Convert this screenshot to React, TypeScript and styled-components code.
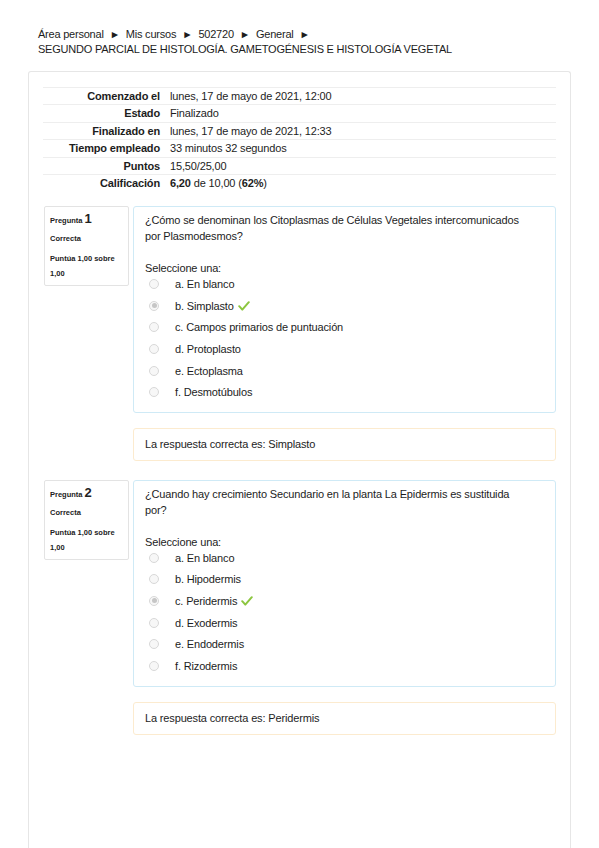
import React from 'react'
import styled, { createGlobalStyle } from 'styled-components'

const GlobalStyle = createGlobalStyle`
  html, body {
    margin: 0;
    padding: 0;
    background: #ffffff;
  }
  body {
    font-family: 'Liberation Sans', Arial, sans-serif;
    color: #1d1d1d;
    font-size: 11px;
    letter-spacing: -0.15px;
  }
`

const Page = styled.div`
  padding: 27px 28px 0 28px;
  height: 848px;
  box-sizing: border-box;
  overflow: hidden;
`

const Breadcrumb = styled.div`
  padding-left: 10px;
  line-height: 15px;
  letter-spacing: -0.22px;
  margin-bottom: 14px;
`

const Arrow = styled.span`
  font-size: 10.5px;
  margin: 0 6px 0 6px;
`

const Region = styled.div`
  border: 1px solid #e6e6e6;
  border-bottom: none;
  border-radius: 3px 3px 0 0;
  padding: 15px 14px 0 14px;
  min-height: 900px;
`

const Summary = styled.div`
  display: grid;
  grid-template-columns: 122px 1fr;
  border-top: 1px solid #eeeeee;
  margin-bottom: 15px;
`

const SummaryLabel = styled.div`
  text-align: right;
  font-weight: bold;
  padding-right: 5px;
  line-height: 16.4px;
  border-bottom: 1px solid #eeeeee;
  &:nth-last-child(2) {
    border-bottom: none;
  }
`

const SummaryValue = styled.div`
  padding-left: 5px;
  line-height: 16.4px;
  border-bottom: 1px solid #eeeeee;
  &:last-child {
    border-bottom: none;
  }
`

const Question = styled.div`
  display: flex;
  align-items: flex-start;
  gap: 4px;
  margin-bottom: 19px;
`

const Info = styled.div`
  width: 85px;
  height: 80px;
  box-sizing: border-box;
  margin-left: 1px;
  border: 1px solid #e3e3e3;
  border-radius: 2px;
  padding: 4px 5px;
  font-size: 7.5px;
  font-weight: bold;
  letter-spacing: 0;
  color: #222;
`

const InfoTitle = styled.div`
  line-height: 16px;
`

const QNumber = styled.span`
  font-size: 13px;
  margin-left: 2px;
`

const InfoLine = styled.div<{ $gap?: number }>`
  line-height: 15px;
  margin-top: ${({ $gap }) => $gap ?? 0}px;
`

const Content = styled.div`
  flex: 1;
  display: flex;
  flex-direction: column;
  gap: 15px;
`

const Formulation = styled.div`
  border: 1px solid #cfeaf6;
  border-radius: 3px;
  padding: 5px 11px 9px 11px;
`

const QText = styled.div`
  line-height: 16px;
`

const Prompt = styled.div`
  margin-top: 16px;
  line-height: 16px;
`

const Options = styled.div`
  display: flex;
  flex-direction: column;
  margin-top: -3px;
`

const Option = styled.div`
  display: flex;
  align-items: center;
  height: 21.6px;
  padding-left: 4px;
`

const Radio = styled.span<{ $checked?: boolean }>`
  width: 10px;
  height: 10px;
  border-radius: 50%;
  border: 1px solid #d8d8d8;
  background: #f7f7f7;
  box-sizing: border-box;
  margin-right: 16px;
  display: inline-flex;
  align-items: center;
  justify-content: center;
  &::after {
    content: '';
    width: 5px;
    height: 5px;
    border-radius: 50%;
    background: ${({ $checked }) => ($checked ? '#c6c6c6' : 'transparent')};
  }
`

const Check = styled.svg`
  margin-left: 4px;
`

const Feedback = styled.div`
  border: 1px solid #fcebcf;
  border-radius: 3px;
  padding: 8px 11px;
  line-height: 15px;
`

type QuestionData = {
  num: number
  text: string[]
  options: string[]
  correct: number
  answer: string
}

const questions: QuestionData[] = [
  {
    num: 1,
    text: ['¿Cómo se denominan los Citoplasmas de Células Vegetales intercomunicados', 'por Plasmodesmos?'],
    options: [
      'a. En blanco',
      'b. Simplasto',
      'c. Campos primarios de puntuación',
      'd. Protoplasto',
      'e. Ectoplasma',
      'f. Desmotúbulos',
    ],
    correct: 1,
    answer: 'Simplasto',
  },
  {
    num: 2,
    text: ['¿Cuando hay crecimiento Secundario en la planta La Epidermis es sustituida', 'por?'],
    options: ['a. En blanco', 'b. Hipodermis', 'c. Peridermis', 'd. Exodermis', 'e. Endodermis', 'f. Rizodermis'],
    correct: 2,
    answer: 'Peridermis',
  },
]

const summary: [string, React.ReactNode][] = [
  ['Comenzado el', 'lunes, 17 de mayo de 2021, 12:00'],
  ['Estado', 'Finalizado'],
  ['Finalizado en', 'lunes, 17 de mayo de 2021, 12:33'],
  ['Tiempo empleado', '33 minutos 32 segundos'],
  ['Puntos', '15,50/25,00'],
  [
    'Calificación',
    <>
      <b>6,20</b> de 10,00 (<b>62%</b>)
    </>,
  ],
]

const CheckIcon = () => (
  <Check width="12" height="10" viewBox="0 0 12 10">
    <path d="M1.2 5.2 L4.3 8.6 L10.8 1.2" fill="none" stroke="#8cc63f" strokeWidth="2" strokeLinecap="round" strokeLinejoin="round" />
  </Check>
)

const App = () => (
  <>
    <GlobalStyle />
    <Page>
      <Breadcrumb>
        <div>
          Área personal<Arrow>►</Arrow>Mis cursos<Arrow>►</Arrow>502720<Arrow>►</Arrow>General<Arrow>►</Arrow>
        </div>
        <div>SEGUNDO PARCIAL DE HISTOLOGÍA. GAMETOGÉNESIS E HISTOLOGÍA VEGETAL</div>
      </Breadcrumb>
      <Region>
        <Summary>
          {summary.map(([label, value]) => (
            <React.Fragment key={label}>
              <SummaryLabel>{label}</SummaryLabel>
              <SummaryValue>{value}</SummaryValue>
            </React.Fragment>
          ))}
        </Summary>
        {questions.map((q) => (
          <Question key={q.num}>
            <Info>
              <InfoTitle>
                Pregunta<QNumber>{q.num}</QNumber>
              </InfoTitle>
              <InfoLine $gap={2}>Correcta</InfoLine>
              <InfoLine $gap={5}>Puntúa 1,00 sobre</InfoLine>
              <InfoLine>1,00</InfoLine>
            </Info>
            <Content>
              <Formulation>
                <QText>
                  {q.text.map((line) => (
                    <div key={line}>{line}</div>
                  ))}
                </QText>
                <Prompt>Seleccione una:</Prompt>
                <Options>
                  {q.options.map((opt, i) => (
                    <Option key={opt}>
                      <Radio $checked={i === q.correct} />
                      {opt}
                      {i === q.correct && <CheckIcon />}
                    </Option>
                  ))}
                </Options>
              </Formulation>
              <Feedback>La respuesta correcta es: {q.answer}</Feedback>
            </Content>
          </Question>
        ))}
      </Region>
    </Page>
  </>
)

export default App
